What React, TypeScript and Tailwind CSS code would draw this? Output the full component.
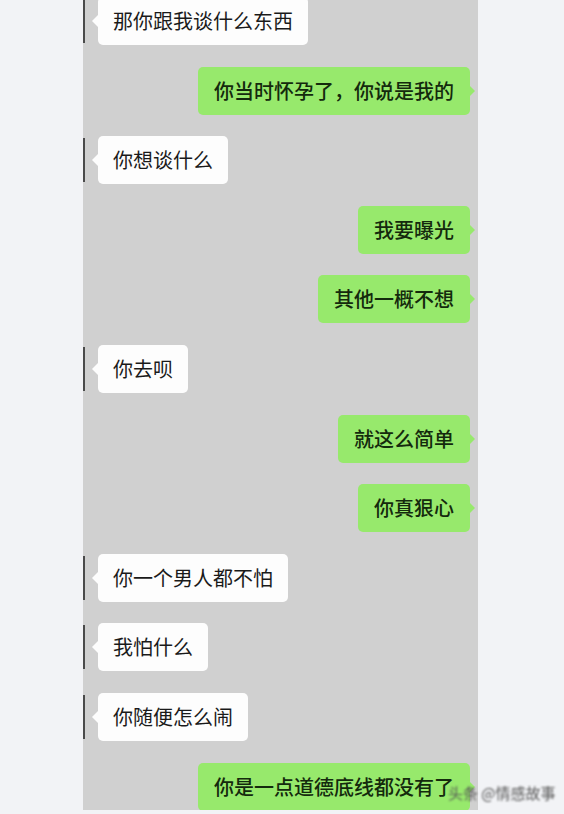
import React from "react";

type Msg = { me: boolean; text: string };

const msgs: Msg[] = [
  { me: false, text: "那你跟我谈什么东西" },
  { me: true, text: "你当时怀孕了，你说是我的" },
  { me: false, text: "你想谈什么" },
  { me: true, text: "我要曝光" },
  { me: true, text: "其他一概不想" },
  { me: false, text: "你去呗" },
  { me: true, text: "就这么简单" },
  { me: true, text: "你真狠心" },
  { me: false, text: "你一个男人都不怕" },
  { me: false, text: "我怕什么" },
  { me: false, text: "你随便怎么闹" },
  { me: true, text: "你是一点道德底线都没有了" },
];

function Bubble({ m }: { m: Msg }) {
  if (m.me) {
    return (
      <div className="flex justify-end pr-[8px] h-[48px] shrink-0">
        <div className="relative h-[48px] flex items-center px-[16px] rounded-[5px] bg-[#97e96c] text-[#142a0d]">
          <span className="text-[20px] leading-[28px] whitespace-nowrap font-medium">{m.text}</span>
          <div className="absolute right-[-5px] top-[18px] w-0 h-0 border-y-[6px] border-y-transparent border-l-[6px] border-l-[#97e96c]" />
        </div>
      </div>
    );
  }
  return (
    <div className="relative flex justify-start pl-[15px] h-[48px] shrink-0">
      <div className="absolute left-0 top-[2px] w-[2px] h-[44px] bg-[#4a4a4a]" />
      <div className="relative h-[48px] flex items-center px-[15px] rounded-[5px] bg-[#fdfdfd] text-[#1a1a1a]">
        <span className="text-[20px] leading-[28px] whitespace-nowrap">{m.text}</span>
        <div className="absolute left-[-6px] top-[18px] w-0 h-0 border-y-[6px] border-y-transparent border-r-[6px] border-r-[#fdfdfd]" />
      </div>
    </div>
  );
}

export default function App() {
  return (
    <div
      className="relative w-[564px] h-[814px] overflow-hidden bg-[#f2f3f6] flex items-start"
      style={{ fontFamily: '"Noto Sans CJK SC", "Noto Sans", sans-serif' }}
    >
      <div className="ml-[83px] w-[395px] h-[810px] bg-[#d0d0d0] overflow-hidden">
        <div className="-mt-[3px] flex flex-col gap-[21.6px]">
          {msgs.map((m, i) => (
            <Bubble key={i} m={m} />
          ))}
        </div>
      </div>
      <div className="absolute left-[448px] top-[783px] text-[15px] leading-[20px] text-[#555] blur-[1.2px] whitespace-nowrap">
        头条 @情感故事
      </div>
    </div>
  );
}
